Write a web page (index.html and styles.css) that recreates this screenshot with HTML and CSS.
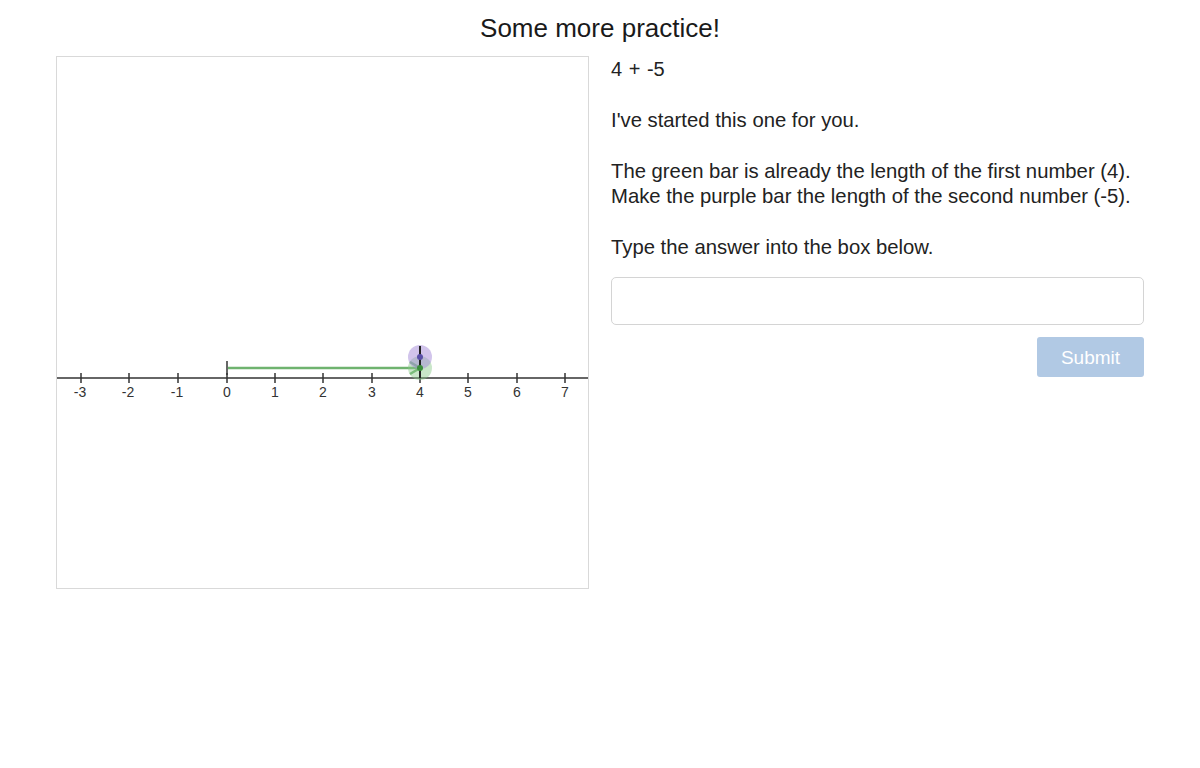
FILE: index.html
```html
<!DOCTYPE html>
<html>
<head>
<meta charset="utf-8">
<link rel="stylesheet" href="styles.css">
</head>
<body>
<h1 class="title">Some more practice!</h1>
<div class="main">
  <div class="canvas">
    <svg width="531" height="531" viewBox="57 57 531 531" xmlns="http://www.w3.org/2000/svg">
      <line x1="57" y1="378" x2="588" y2="378" stroke="#333" stroke-width="1.5"/>
      <g stroke="#333" stroke-width="1.5">
        <line x1="81" y1="373" x2="81" y2="383"/>
        <line x1="129" y1="373" x2="129" y2="383"/>
        <line x1="178" y1="373" x2="178" y2="383"/>
        <line x1="227" y1="373" x2="227" y2="383"/>
        <line x1="275" y1="373" x2="275" y2="383"/>
        <line x1="323" y1="373" x2="323" y2="383"/>
        <line x1="372" y1="373" x2="372" y2="383"/>
        <line x1="420" y1="373" x2="420" y2="383"/>
        <line x1="468" y1="373" x2="468" y2="383"/>
        <line x1="517" y1="373" x2="517" y2="383"/>
        <line x1="565" y1="373" x2="565" y2="383"/>
      </g>
      <g class="lbl" text-anchor="middle">
        <text x="80" y="397">-3</text>
        <text x="128" y="397">-2</text>
        <text x="177" y="397">-1</text>
        <text x="227" y="397">0</text>
        <text x="275" y="397">1</text>
        <text x="323" y="397">2</text>
        <text x="372" y="397">3</text>
        <text x="420" y="397">4</text>
        <text x="468" y="397">5</text>
        <text x="517" y="397">6</text>
        <text x="565" y="397">7</text>
      </g>
      <line x1="227" y1="361" x2="227" y2="375" stroke="#333" stroke-width="1.5"/>
      <line x1="228" y1="368" x2="418" y2="368" stroke="#6fb36f" stroke-width="2.5"/>
      <polyline points="410,362 420,368 410,374" fill="none" stroke="#6fb36f" stroke-width="2.5"/>
      <circle cx="420" cy="368" r="12" fill="#88c888" fill-opacity="0.45"/>
      <circle cx="420" cy="357" r="12" fill="#a48ad8" fill-opacity="0.5"/>
      <line x1="420" y1="346" x2="420" y2="378" stroke="#222" stroke-width="2"/>
      <circle cx="420" cy="357" r="3" fill="#5a50a8"/>
      <circle cx="420" cy="368" r="3" fill="#3b8f3b"/>
    </svg>
  </div>
  <div class="panel">
    <p class="problem">4 + -5</p>
    <p>I've started this one for you.</p>
    <p>The green bar is already the length of the first number (4).<br>Make the purple bar the length of the second number (-5).</p>
    <p class="last">Type the answer into the box below.</p>
    <input class="answer" type="text">
    <div class="actions">
      <button class="submit" disabled>Submit</button>
    </div>
  </div>
</div>
</body>
</html>
```
FILE: styles.css
```css
html, body {
  margin: 0;
  padding: 0;
  background: #fff;
}
body {
  font-family: "Liberation Sans", Arial, sans-serif;
  color: #222;
}
.title {
  margin: 0;
  height: 56px;
  line-height: 56px;
  text-align: center;
  font-size: 26px;
  font-weight: normal;
  color: #1a1a1a;
}
.main {
  display: flex;
  padding-left: 56px;
  gap: 22px;
}
.canvas {
  width: 531px;
  height: 531px;
  border: 1px solid #d9d9d9;
}
.canvas svg {
  display: block;
}
.lbl text {
  font-family: "Liberation Sans", Arial, sans-serif;
  font-size: 14px;
  fill: #333;
}
.panel {
  width: 533px;
  display: flex;
  flex-direction: column;
  padding-top: 1px;
}
.panel p {
  margin: 0 0 26px 0;
  font-size: 20.3px;
  line-height: 25px;
  white-space: nowrap;
}
.panel p.problem {
  font-size: 20px;
  word-spacing: 1px;
}
.panel p.last {
  margin-bottom: 17px;
}
.answer {
  box-sizing: border-box;
  width: 533px;
  height: 48px;
  border: 1.5px solid #d4d4d4;
  border-radius: 5px;
  margin: 0;
  font-size: 20px;
}
.actions {
  display: flex;
  justify-content: flex-end;
  margin-top: 12px;
}
.submit {
  width: 107px;
  height: 40px;
  border: none;
  border-radius: 3px;
  padding: 2px 0 0 0;
  background: #b1c9e4;
  color: #fff;
  font-family: "Liberation Sans", Arial, sans-serif;
  font-size: 19px;
}
```
